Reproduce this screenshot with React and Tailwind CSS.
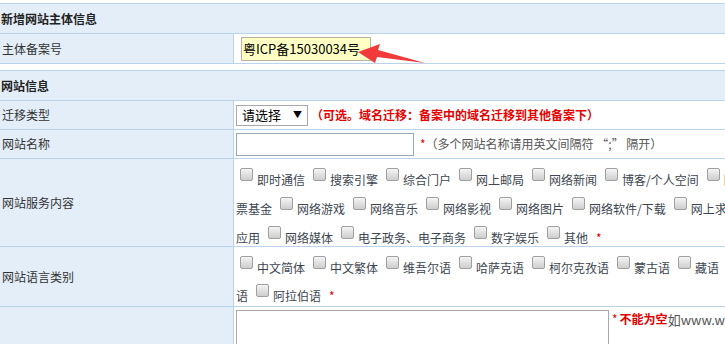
import React from "react";

const FONT = { fontFamily: '"Noto Sans CJK SC", "Microsoft YaHei", sans-serif' };

const Cb = () => (
  <span className="inline-block w-[13px] h-[13px] shrink-0 ml-[4px] mr-[4px] rounded-[2px] border border-[#a0a0a0] bg-linear-to-b from-[#f5f5f5] to-[#cdcdcd]" />
);

const Item = ({ t }) => (
  <span className="flex items-start shrink-0 mr-[4px]">
    <Cb />
    <span className="mt-[4px] leading-[16px] shrink-0">{t}</span>
  </span>
);

const Lead = ({ t }) => (
  <span className="mt-[4px] leading-[16px] shrink-0 mr-[4px]">{t}</span>
);

const Star = () => (
  <span className="mt-[4px] leading-[16px] shrink-0 ml-[4px] text-[#e00000]">*</span>
);

const Line = ({ children }) => (
  <div className="flex items-start h-[20px] whitespace-nowrap">{children}</div>
);

const Label = ({ children, className = "" }) => (
  <div
    className={
      "w-[234px] shrink-0 bg-[#e4eef9] border-r border-[#bcd4ea] pl-[2px] flex items-center text-[#333] " +
      className
    }
  >
    {children}
  </div>
);

export default function App() {
  return (
    <div
      className="relative w-[725px] h-[344px] overflow-hidden bg-white text-[12px] text-[#333]"
      style={FONT}
    >
      <div className="pt-[3px]">
        {/* table 1 */}
        <div className="border-t border-[#bcd4ea]">
          <div className="h-[30px] bg-[#e4eef9] border-b border-[#bcd4ea] flex items-center pl-[1px] font-bold text-[#222]">
            新增网站主体信息
          </div>
          <div className="flex h-[30px] border-b border-[#bcd4ea]">
            <Label>主体备案号</Label>
            <div className="flex-1 flex items-center pl-[7px]">
              <div className="w-[130px] h-[24px] bg-[#ffffc4] border border-[#b5b5a0] flex items-center pl-[1px] text-[13px] text-black whitespace-nowrap">
                粤ICP备15030034号
              </div>
            </div>
          </div>
        </div>

        <div className="h-[6px]" />

        {/* table 2 */}
        <div className="border-t border-[#bcd4ea]">
          <div className="h-[30px] bg-[#e4eef9] border-b border-[#bcd4ea] flex items-center pl-[1px] font-bold text-[#222]">
            网站信息
          </div>

          <div className="flex h-[29px] border-b border-[#bcd4ea]">
            <Label>迁移类型</Label>
            <div className="flex-1 flex items-center pl-[2px] whitespace-nowrap">
              <div className="w-[72px] h-[21px] border border-[#a9a9a9] bg-white flex items-center justify-between pl-[5px] pr-[5px] text-[13px] text-black shrink-0">
                <span>请选择</span>
                <span className="text-[9px]">▼</span>
              </div>
              <span className="ml-[3px] font-bold text-[#e60000] shrink-0">
                （可选。域名迁移：备案中的域名迁移到其他备案下）
              </span>
            </div>
          </div>

          <div className="flex h-[29px] border-b border-[#bcd4ea]">
            <Label>网站名称</Label>
            <div className="flex-1 flex items-center pl-[2px] whitespace-nowrap">
              <div className="w-[178px] h-[23px] border border-[#9aa7b4] bg-white shrink-0" />
              <span className="ml-[6px] text-[#e00000] shrink-0">*</span>
              <span className="text-[#555] shrink-0">（多个网站名称请用英文间隔符 “;” 隔开）</span>
            </div>
          </div>

          <div className="flex border-b border-[#bcd4ea]">
            <Label>网站服务内容</Label>
            <div className="flex-1 pl-[2px] pt-[9px] flex flex-col gap-[9px] text-[#3d4650]">
              <Line>
                <Item t="即时通信" />
                <Item t="搜索引擎" />
                <Item t="综合门户" />
                <Item t="网上邮局" />
                <Item t="网络新闻" />
                <Item t="博客/个人空间" />
                <Item t="网上炒股/股" />
              </Line>
              <Line>
                <Lead t="票基金" />
                <Item t="网络游戏" />
                <Item t="网络音乐" />
                <Item t="网络影视" />
                <Item t="网络图片" />
                <Item t="网络软件/下载" />
                <Item t="网上求职" />
              </Line>
              <Line>
                <Lead t="应用" />
                <Item t="网络媒体" />
                <Item t="电子政务、电子商务" />
                <Item t="数字娱乐" />
                <Item t="其他" />
                <Star />
              </Line>
            </div>
          </div>

          <div className="flex border-b border-[#bcd4ea]">
            <Label>网站语言类别</Label>
            <div className="flex-1 pl-[2px] pt-[9px] pb-[2px] flex flex-col gap-[8px] text-[#3d4650]">
              <Line>
                <Item t="中文简体" />
                <Item t="中文繁体" />
                <Item t="维吾尔语" />
                <Item t="哈萨克语" />
                <Item t="柯尔克孜语" />
                <Item t="蒙古语" />
                <Item t="藏语" />
                <Item t="朝鲜" />
              </Line>
              <Line>
                <Lead t="语" />
                <Item t="阿拉伯语" />
                <Star />
              </Line>
            </div>
          </div>

          <div className="flex h-[60px]">
            <Label />
            <div className="flex-1 flex items-start pl-[2px] pt-[3px] whitespace-nowrap">
              <div className="w-[373px] h-[60px] border border-[#a9a9a9] bg-white shrink-0" />
              <span className="ml-[3px] text-[#e00000] shrink-0">*</span>
              <span className="ml-[2px] font-bold text-[#e00000] shrink-0">不能为空</span>
              <span className="text-[#555] text-[13px] shrink-0">如www.wirelessweb.cn</span>
            </div>
          </div>
        </div>
      </div>

      {/* red arrow annotation */}
      <svg
        className="absolute left-[350px] top-[38px]"
        width="85"
        height="32"
        viewBox="350 38 85 32"
      >
        <polygon
          points="358,52 380,44 378,50 425,63 377,57 375,63"
          fill="#f23a3a"
        />
      </svg>
    </div>
  );
}
